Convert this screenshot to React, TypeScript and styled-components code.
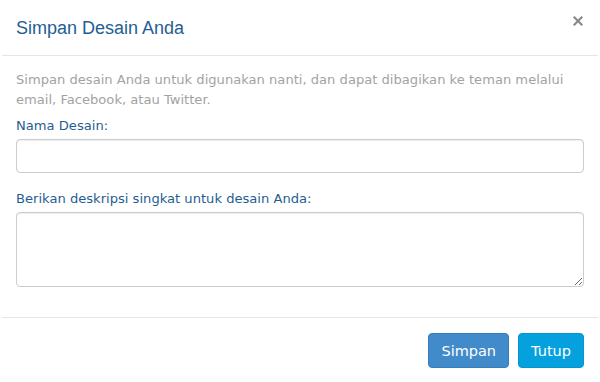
import React, { useState } from 'react';
import styled, { createGlobalStyle } from 'styled-components';

const GlobalStyle = createGlobalStyle`
  html, body {
    margin: 0;
    padding: 0;
    background: #ffffff;
  }
  * {
    box-sizing: border-box;
  }
`;

const Dialog = styled.div`
  width: 600px;
  height: 382px;
  background: #fff;
  font-family: 'DejaVu Sans', 'Noto Sans', sans-serif;
  display: flex;
  flex-direction: column;
`;

const Header = styled.div`
  height: 56px;
  margin: 0 2px;
  padding: 0 14px;
  display: flex;
  align-items: center;
  justify-content: space-between;
  border-bottom: 1px solid #e5e5e5;
`;

const Title = styled.h4`
  margin: 0;
  font-family: 'Liberation Sans', Arial, sans-serif;
  font-weight: normal;
  font-size: 18px;
  color: #1f5e93;
  padding-top: 2px;
`;

const CloseButton = styled.button`
  border: none;
  background: transparent;
  padding: 0;
  margin-top: -14px;
  margin-right: 1px;
  cursor: pointer;
  color: #8a8a8a;
  display: flex;
`;

const Body = styled.div`
  padding: 14px 16px 30px;
  display: flex;
  flex-direction: column;
`;

const Intro = styled.p`
  margin: 0 0 7px;
  font-size: 13.1px;
  line-height: 19.5px;
  color: #a3a3a3;
`;

const Label = styled.label`
  display: block;
  font-size: 13.1px;
  line-height: 20px;
  color: #1f5e93;
  margin-bottom: 3px;
`;

const Field = styled.div<{ $space?: number }>`
  margin-bottom: ${({ $space }) => $space ?? 0}px;
`;

const TextInput = styled.input`
  display: block;
  width: 100%;
  height: 34px;
  border: 1px solid #cccccc;
  border-radius: 4px;
  box-shadow: inset 0 1px 1px rgba(0, 0, 0, 0.075);
  padding: 6px 12px;
  font-size: 13px;
  font-family: inherit;
  outline: none;
`;

const TextArea = styled.textarea`
  display: block;
  width: 100%;
  height: 75px;
  margin-top: 1px;
  border: 1px solid #cccccc;
  border-radius: 4px;
  box-shadow: inset 0 1px 1px rgba(0, 0, 0, 0.075);
  padding: 6px 12px;
  font-size: 13px;
  font-family: inherit;
  resize: vertical;
  outline: none;
`;

const Footer = styled.div`
  border-top: 1px solid #e5e5e5;
  margin: 0 2px;
  padding: 15px 14px 0;
  display: flex;
  justify-content: flex-end;
  gap: 9px;
`;

const Button = styled.button<{ $tone: 'primary' | 'info' }>`
  height: 35px;
  padding: 0 12px;
  border-radius: 4px;
  font-family: 'DejaVu Sans', 'Noto Sans', sans-serif;
  font-size: 14.5px;
  color: #fff;
  cursor: pointer;
  background: ${({ $tone }) => ($tone === 'primary' ? '#428bca' : '#04a1de')};
  border: 1px solid ${({ $tone }) => ($tone === 'primary' ? '#357ebd' : '#0795cc')};
`;

const App: React.FC = () => {
  const [name, setName] = useState('');
  const [desc, setDesc] = useState('');

  return (
    <Dialog>
      <GlobalStyle />
      <Header>
        <Title>Simpan Desain Anda</Title>
        <CloseButton aria-label="Tutup">
          <svg width="10" height="10" viewBox="0 0 10 10">
            <path d="M1.5 1.5 L8.5 8.5 M8.5 1.5 L1.5 8.5" stroke="currentColor" strokeWidth="2.2" strokeLinecap="square" />
          </svg>
        </CloseButton>
      </Header>
      <Body>
        <Intro>
          Simpan desain Anda untuk digunakan nanti, dan dapat dibagikan ke teman melalui email, Facebook, atau Twitter.
        </Intro>
        <Field $space={16}>
          <Label>Nama Desain:</Label>
          <TextInput value={name} onChange={(e) => setName(e.target.value)} />
        </Field>
        <Field>
          <Label>Berikan deskripsi singkat untuk desain Anda:</Label>
          <TextArea value={desc} onChange={(e) => setDesc(e.target.value)} />
        </Field>
      </Body>
      <Footer>
        <Button $tone="primary">Simpan</Button>
        <Button $tone="info">Tutup</Button>
      </Footer>
    </Dialog>
  );
};

export default App;
